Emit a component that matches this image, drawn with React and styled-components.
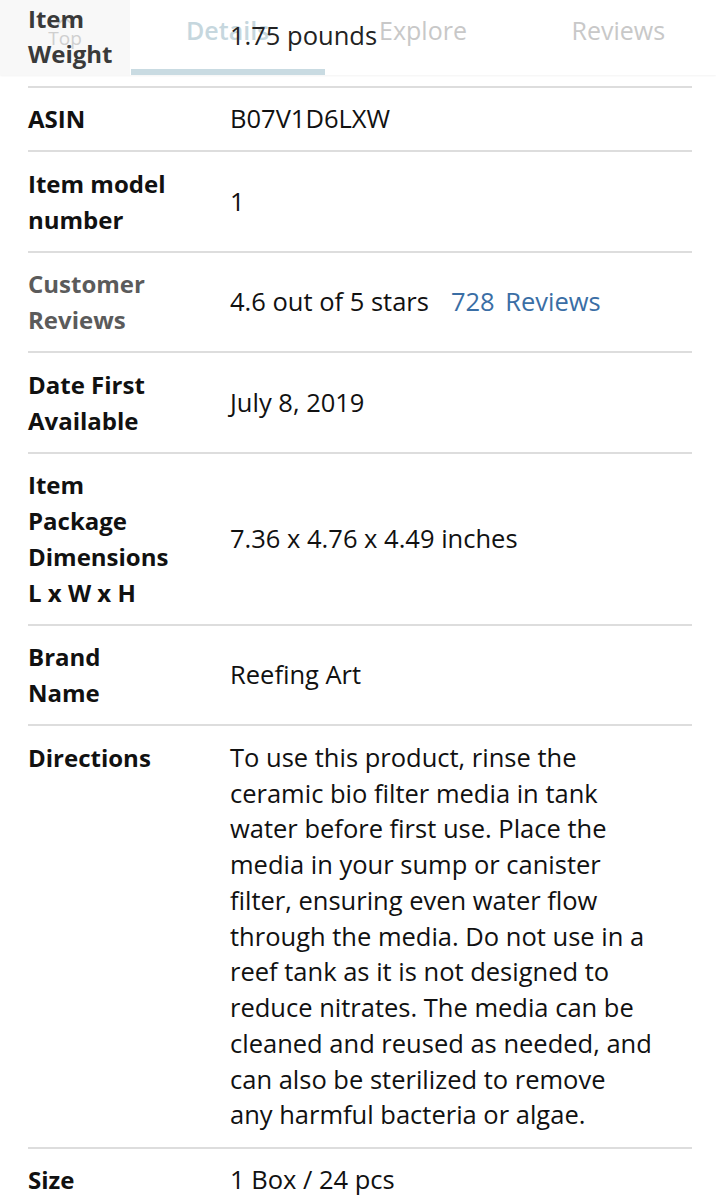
import React from "react";
import styled, { createGlobalStyle } from "styled-components";

const GlobalStyle = createGlobalStyle`
  html, body { margin: 0; padding: 0; background: #ffffff; }
  body { font-family: "Open Sans", "Noto Sans", sans-serif; color: #111; }
`;

const Page = styled.div`
  position: relative;
  width: 716px;
  height: 1200px;
  overflow: hidden;
  background: #fff;
`;

const TabBar = styled.nav`
  position: absolute;
  top: 0;
  left: 0;
  right: 0;
  height: 75px;
  display: flex;
  background: #ffffff;
  box-shadow: 0 1px 2px rgba(0, 0, 0, 0.05);
  z-index: 0;
`;

const TopTab = styled.div`
  width: 130px;
  display: flex;
  flex-direction: column;
  align-items: center;
  justify-content: center;
  padding-bottom: 12px;
  background: #f8f8f8;
  color: #cfcfcf;
  font-size: 19px;
  line-height: 20px;
  gap: 2px;
`;

const Tab = styled.div`
  flex: 1;
  position: relative;
  display: flex;
  align-items: center;
  justify-content: center;
  padding-bottom: 16px;
  font-size: 25px;
  font-weight: ${(p) => (p.$active ? 600 : 400)};
  color: ${(p) => (p.$active ? "#c6d7de" : "#c8c8c8")};

  &::after {
    content: "";
    display: ${(p) => (p.$active ? "block" : "none")};
    position: absolute;
    left: 1px;
    right: 0;
    bottom: 0;
    height: 6px;
    background: #c9dbe2;
  }
`;

const List = styled.div`
  position: relative;
  z-index: 1;
  margin-top: -13px;
`;

const Row = styled.div`
  display: grid;
  grid-template-columns: 142px 423px;
  column-gap: 60px;
  align-items: ${(p) => (p.$top ? "start" : "center")};
  margin: 0 24px 0 28px;
  padding: 13.5px 0;
  border-bottom: 2px solid #dddddd;
  line-height: 35.75px;
`;

const Label = styled.div`
  font-size: 24px;
  font-weight: 700;
  color: ${(p) => p.$color || "#111111"};
`;

const Value = styled.div`
  font-size: 25.5px;
  font-weight: 400;
  color: ${(p) => p.$color || "#111111"};
`;

const Link = styled.span`
  color: #3a6ea5;
  margin-left: 22px;
  word-spacing: 4px;
`;

const rows = [
  { label: "Item Weight", value: "1.75 pounds", labelColor: "#3a3a3a", valueColor: "#222" },
  { label: "ASIN", value: "B07V1D6LXW" },
  { label: "Item model number", value: "1" },
  {
    label: "Customer Reviews",
    labelColor: "#5b5b5b",
    value: (
      <>
        4.6 out of 5 stars<Link>728 Reviews</Link>
      </>
    ),
  },
  { label: "Date First Available", value: "July 8, 2019" },
  { label: "Item Package Dimensions L x W x H", value: "7.36 x 4.76 x 4.49 inches" },
  { label: "Brand Name", value: "Reefing Art" },
  {
    label: "Directions",
    value:
      "To use this product, rinse the ceramic bio filter media in tank water before first use. Place the media in your sump or canister filter, ensuring even water flow through the media. Do not use in a reef tank as it is not designed to reduce nitrates. The media can be cleaned and reused as needed, and can also be sterilized to remove any harmful bacteria or algae.",
    top: true,
  },
  { label: "Size", value: "1 Box / 24 pcs" },
];

const Caret = () => (
  <svg width="18" height="10" viewBox="0 0 18 10" fill="none">
    <path d="M2 8 L9 2 L16 8" stroke="#d0d0d0" strokeWidth="2" strokeLinecap="round" strokeLinejoin="round" />
  </svg>
);

export default function App() {
  return (
    <Page>
      <GlobalStyle />
      <TabBar>
        <TopTab>
          <Caret />
          <span>Top</span>
        </TopTab>
        <Tab $active>Details</Tab>
        <Tab>Explore</Tab>
        <Tab>Reviews</Tab>
      </TabBar>
      <List>
        {rows.map((r) => (
          <Row key={r.label} $top={r.top}>
            <Label $color={r.labelColor}>{r.label}</Label>
            <Value $color={r.valueColor}>{r.value}</Value>
          </Row>
        ))}
      </List>
    </Page>
  );
}
